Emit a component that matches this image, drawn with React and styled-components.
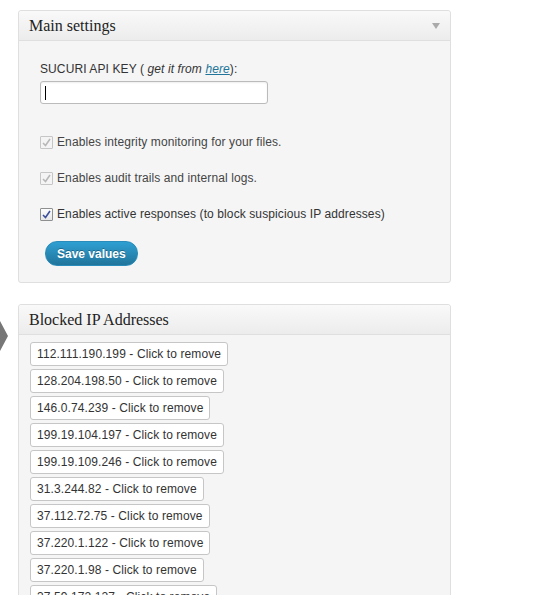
import React from "react";
import styled, { createGlobalStyle } from "styled-components";

const Global = createGlobalStyle`
  html, body { margin: 0; padding: 0; background: #fff; }
  body { font-family: "Liberation Sans", Arial, sans-serif; font-size: 12px; color: #333; letter-spacing: 0.1px; }
`;

const Page = styled.div`
  position: relative;
  padding: 10px 0 0 18px;
  width: 433px;
  display: flex;
  flex-direction: column;
  gap: 21px;
`;

const Panel = styled.section`
  background: #f5f5f5;
  border: 1px solid #dfdfdf;
  border-radius: 3px;
  box-shadow: 0 1px 0 #fff inset;
`;

const PanelHeader = styled.header`
  height: 29px;
  display: flex;
  align-items: center;
  justify-content: space-between;
  padding: 0 10px 0 10px;
  background: linear-gradient(to bottom, #f9f9f9, #ececec);
  border-bottom: 1px solid #dfdfdf;
  border-radius: 3px 3px 0 0;
`;

const Title = styled.h3`
  margin: 0;
  font-family: "Liberation Serif", "Times New Roman", serif;
  font-weight: normal;
  font-size: 16px;
  letter-spacing: 0;
  color: #222;
`;

const Toggle = styled.span`
  width: 0;
  height: 0;
  border-left: 4px solid transparent;
  border-right: 4px solid transparent;
  border-top: 6px solid #aaa;
`;

const SettingsBody = styled.div`
  padding: 21px 21px 16px 21px;
  display: flex;
  flex-direction: column;
`;

const Label = styled.label`
  display: block;
  line-height: 14px;
  color: #333;
  a { color: #21759b; }
`;

const KeyInput = styled.div`
  margin-top: 5px;
  height: 23px;
  width: 228px;
  border: 1px solid #bbb;
  border-radius: 3px;
  background: #fff;
  box-shadow: inset 0 1px 2px rgba(0,0,0,0.07);
  display: flex;
  align-items: center;
  padding-left: 4px;
  box-sizing: border-box;
`;

const Caret = styled.span`
  width: 1px;
  height: 14px;
  background: #000;
`;

const Options = styled.div`
  margin-top: 31px;
  display: flex;
  flex-direction: column;
  gap: 22px;
`;

const Option = styled.div`
  display: flex;
  align-items: center;
  gap: 4px;
  height: 14px;
  color: ${p => (p.$disabled ? "#444" : "#333")};
`;

const Box = styled.span`
  width: 11px;
  height: 11px;
  border: 1px solid ${p => (p.$disabled ? "#c6c6c6" : "#8e8f8f")};
  background: ${p => (p.$disabled ? "#f4f4f4" : "linear-gradient(#fdfdfd, #e6e6e6)")};
  display: inline-flex;
  align-items: center;
  justify-content: center;
  border-radius: 1px;
`;

const SaveButton = styled.button`
  margin-top: 20px;
  margin-left: 5px;
  align-self: flex-start;
  height: 25px;
  padding: 0 11px;
  border-radius: 12px;
  border: 1px solid #298cba;
  background: linear-gradient(to bottom, #2e9fd2, #21759b);
  color: #fff;
  font-family: "Liberation Sans", Arial, sans-serif;
  font-weight: bold;
  font-size: 12px;
  text-shadow: 0 -1px 0 rgba(0,0,0,0.3);
  cursor: pointer;
`;

const BlockedList = styled.div`
  padding: 7px 0 0 11px;
  display: flex;
  flex-direction: column;
  align-items: flex-start;
  gap: 3px;
`;

const IpButton = styled.button`
  height: 24px;
  padding: 0 6px;
  background: #fff;
  border: 1px solid #c6c6c6;
  border-radius: 3px;
  font-family: "Liberation Sans", Arial, sans-serif;
  font-size: 12px;
  letter-spacing: 0.1px;
  color: #333;
  cursor: pointer;
`;

const Pointer = styled.svg`
  position: absolute;
  left: 0;
  top: 321px;
`;

const Check = ({ color }) => (
  <svg width="9" height="9" viewBox="0 0 9 9">
    <path d="M1 5 L3.5 7.5 L8 1" fill="none" stroke={color} strokeWidth="1.6" />
  </svg>
);

const ips = [
  "112.111.190.199",
  "128.204.198.50",
  "146.0.74.239",
  "199.19.104.197",
  "199.19.109.246",
  "31.3.244.82",
  "37.112.72.75",
  "37.220.1.122",
  "37.220.1.98",
  "37.59.172.127",
];

export default function App() {
  return (
    <>
      <Global />
      <Page>
        <Panel>
          <PanelHeader>
            <Title>Main settings</Title>
            <Toggle />
          </PanelHeader>
          <SettingsBody>
            <Label>
              SUCURI API KEY ( <i>get it from <a href="#">here</a></i>):
            </Label>
            <KeyInput>
              <Caret />
            </KeyInput>
            <Options>
              <Option $disabled>
                <Box $disabled><Check color="#b8b8b8" /></Box>
                Enables integrity monitoring for your files.
              </Option>
              <Option $disabled>
                <Box $disabled><Check color="#b8b8b8" /></Box>
                Enables audit trails and internal logs.
              </Option>
              <Option>
                <Box><Check color="#3c4f9a" /></Box>
                Enables active responses (to block suspicious IP addresses)
              </Option>
            </Options>
            <SaveButton>Save values</SaveButton>
          </SettingsBody>
        </Panel>
        <Panel>
          <PanelHeader>
            <Title>Blocked IP Addresses</Title>
          </PanelHeader>
          <BlockedList>
            {ips.map(ip => (
              <IpButton key={ip}>{ip} - Click to remove</IpButton>
            ))}
          </BlockedList>
        </Panel>
        <Pointer width="9" height="30" viewBox="0 0 9 30">
          <path d="M0 0 L0 30 L8 15 Z" fill="#777" />
        </Pointer>
      </Page>
    </>
  );
}
